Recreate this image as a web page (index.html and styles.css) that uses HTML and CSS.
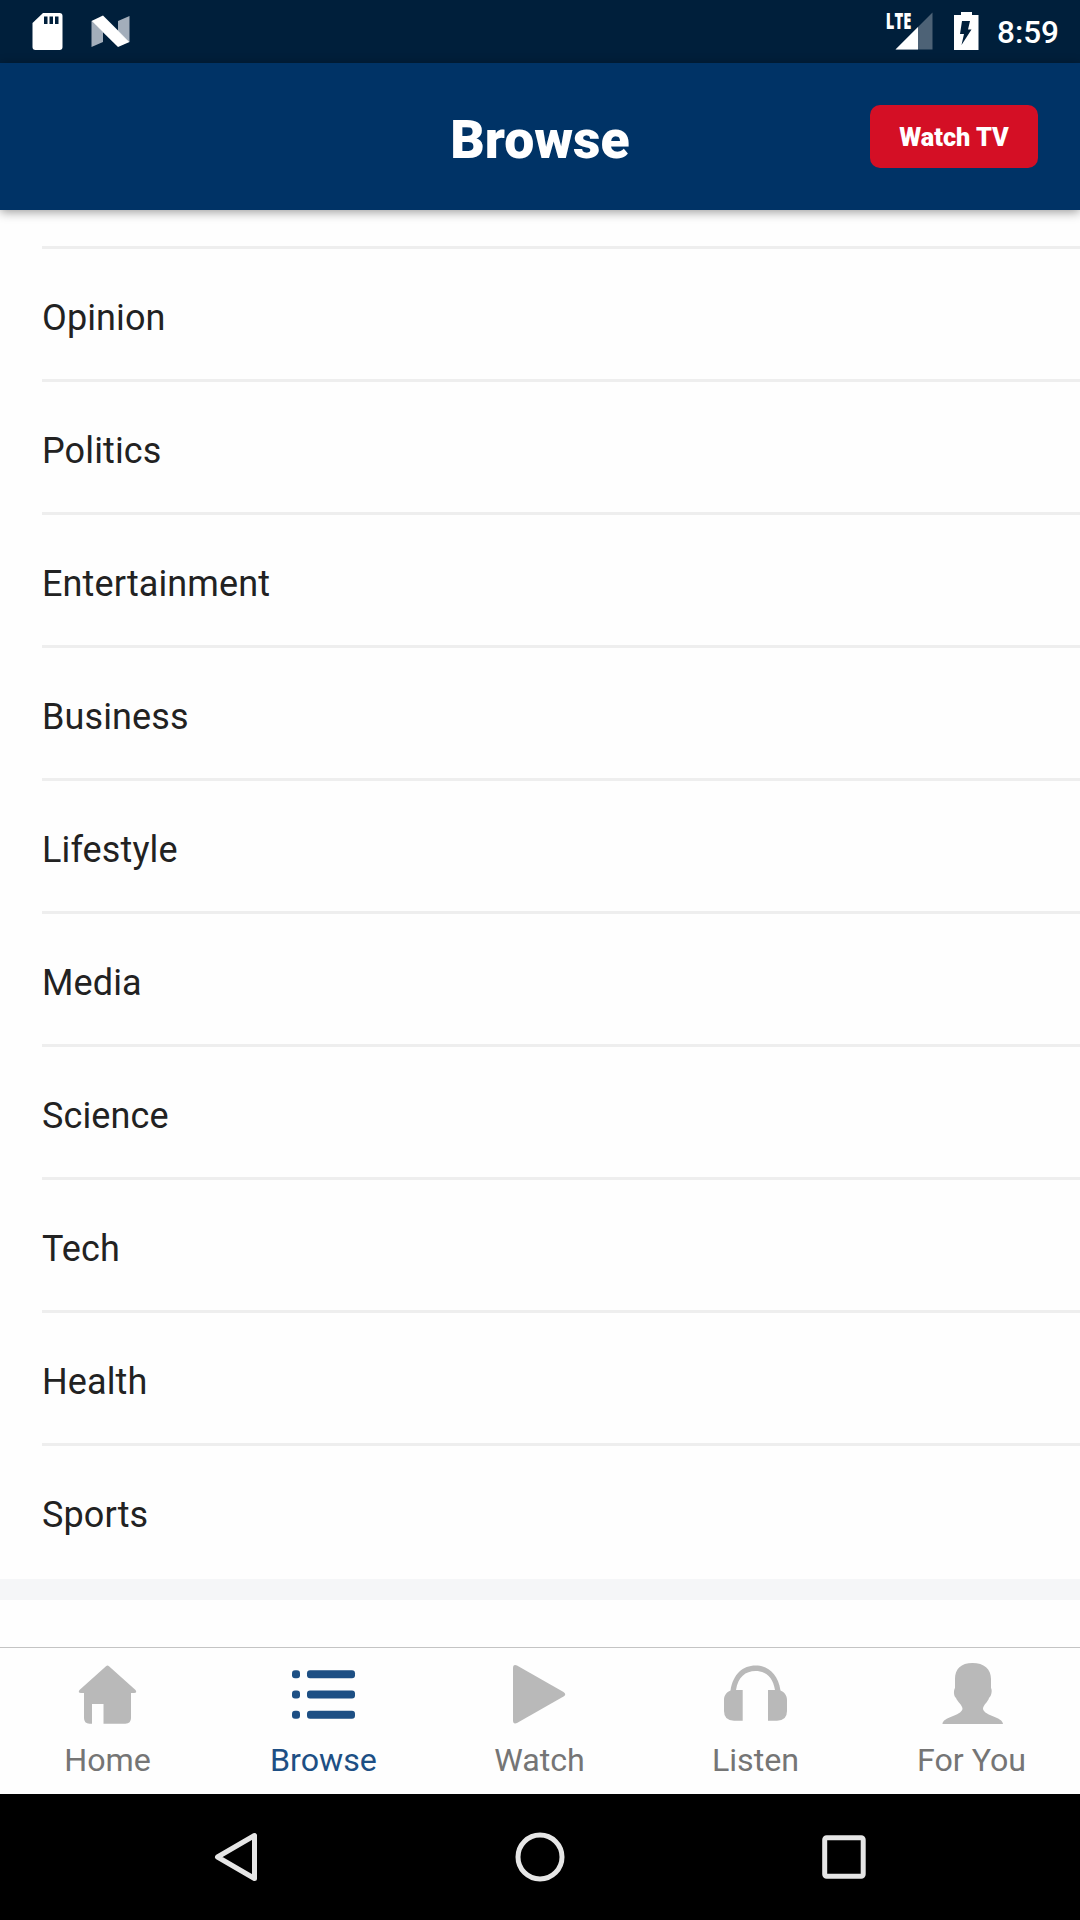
FILE: index.html
```html
<!DOCTYPE html>
<html lang="en">
<head>
<meta charset="utf-8">
<title>Browse</title>
<link rel="stylesheet" href="styles.css">
</head>
<body>
<div class="app">
  <div class="status">
    <svg class="status-left" width="140" height="63" viewBox="0 0 140 63">
      <path fill="#fff" d="M43 13H59.500Q62.500 13 62.500 16V47Q62.500 50 59.500 50H35.500Q32.500 50 32.500 47V23Z"/>
      <path fill="#001f3b" d="M44 16.500h3.500v7.500H44zM49.500 16.500H53v7.500h-3.500zM55 16.500h3.500v7.500H55z"/>
      <path fill="#a3aebb" d="M91.500 21L103 32V42L91.500 47ZM118 21L129.500 16V42L118 31Z"/>
      <path fill="#fff" d="M91.500 21L103 15.500L129.500 42L118 47Z"/>
    </svg>
    <div class="status-right">
      <svg width="100" height="63" viewBox="880 0 100 63">
        <path fill="#4d6276" d="M932.500 12.500V49.500H895.500Z"/>
        <path fill="#001f3b" d="M880 10h33v21h-33z"/>
        <path fill="#fff" d="M918 27V49.500H895.500Z"/>
        <text class="lte" x="885.800" y="29.200" textLength="25.500" lengthAdjust="spacingAndGlyphs">LTE</text>
        <path fill="#fff" d="M961 12h11v3h6.500v35H954V15h7z"/>
        <path fill="#001f3b" d="M962 21h8l-2 8.500h3.500L961.500 45l2.500-11h-4z"/>
      </svg>
      <span class="clock">8:59</span>
    </div>
  </div>
  <header class="header">
    <h1 class="title">Browse</h1>
    <button class="watch-tv">Watch TV</button>
  </header>
  <main class="content">
    <ul class="list">
      <li class="row">Opinion</li>
      <li class="row">Politics</li>
      <li class="row">Entertainment</li>
      <li class="row">Business</li>
      <li class="row">Lifestyle</li>
      <li class="row">Media</li>
      <li class="row">Science</li>
      <li class="row">Tech</li>
      <li class="row">Health</li>
      <li class="row">Sports</li>
    </ul>
    <div class="band"></div>
  </main>
  <nav class="tabs">
    <a class="tab">
      <svg class="icon" width="80" height="80" viewBox="67 1656 80 80"><path d="M106 1666.200Q107.500 1665 109 1666.200L135.500 1690Q137.500 1693 134 1693H131V1718Q131 1723.700 125.300 1723.700H103.500V1704H92V1723.700H89.500Q84 1723.700 84 1718V1693H81Q77.500 1693 79.500 1690Z"/></svg>
      <span>Home</span>
    </a>
    <a class="tab active">
      <svg class="icon" width="80" height="80" viewBox="283 1656 80 80"><rect x="292" y="1670.300" width="8" height="8" rx="3"/><rect x="307" y="1670.300" width="48" height="8" rx="3"/><rect x="292" y="1690.500" width="8" height="8" rx="3"/><rect x="307" y="1690.500" width="48" height="8" rx="3"/><rect x="292" y="1710.700" width="8" height="8" rx="3"/><rect x="307" y="1710.700" width="48" height="8" rx="3"/></svg>
      <span>Browse</span>
    </a>
    <a class="tab">
      <svg class="icon" width="80" height="80" viewBox="499 1656 80 80"><path d="M513 1668Q513 1664 517 1665.500L563.500 1692Q567 1694.300 563.500 1696.500L517 1723Q513 1724.500 513 1720.500Z"/></svg>
      <span>Watch</span>
    </a>
    <a class="tab">
      <svg class="icon" width="80" height="80" viewBox="715 1656 80 80"><path d="M730.500 1690.500C733 1674 743 1665.500 755.500 1665.500S778 1674 780.500 1690.500C784.500 1692 787 1695.500 787 1700V1711Q787 1720.700 777 1720.700H768V1690H775C773 1677 765.500 1671 755.500 1671S738 1677 736 1690H742.700V1720.700H734Q724 1720.700 724 1711V1700C724 1695.500 726.500 1692 730.500 1690.500Z"/></svg>
      <span>Listen</span>
    </a>
    <a class="tab">
      <svg class="icon" width="80" height="80" viewBox="931 1656 80 80"><path d="M972.500 1663C984 1663 991 1669 991 1679V1688C992.500 1690 991.500 1696 989 1698C988 1702 983 1705 983 1709C984.500 1716 1003 1717 1003 1724H942.500C942.500 1717 961 1716 962.500 1709C962.500 1705 957.500 1702 956 1698C953.500 1696 953.500 1690 955 1688V1679C955 1669 961 1663 972.500 1663Z"/></svg>
      <span>For You</span>
    </a>
  </nav>
  <div class="sysnav">
    <svg width="52" height="60" viewBox="211 1827 52 60"><path d="M254.500 1835.500V1878.500L217.500 1857Z"/></svg>
    <svg width="60" height="60" viewBox="510 1827 60 60"><circle cx="540" cy="1857" r="22"/></svg>
    <svg width="54" height="60" viewBox="817 1827 54 60"><rect x="824.700" y="1837.700" width="38.500" height="38.500" rx="2"/></svg>
  </div>
</div>
</body>
</html>
```
FILE: styles.css
```css
* { box-sizing: border-box; }
body { margin: 0; font-family: Roboto, sans-serif; background: #fefefe; }
.app { width: 1080px; height: 1920px; display: flex; flex-direction: column; overflow: hidden; }
.status { height: 63px; flex: none; background: #001f3b; display: flex; justify-content: space-between; }
.status-right { display: flex; align-items: center; padding-right: 22px; }
.lte { font: 800 23px "Open Sans", sans-serif; fill: #fff; }
.clock { color: #fff; font-size: 31.5px; font-weight: 500; line-height: 63px; padding-top: 1px; width: 61px; margin-left: 17px; }
.header {
  height: 147px; flex: none; background: #003366; color: #fff; z-index: 1;
  display: grid; grid-template-columns: 1fr auto 1fr; align-items: center; padding: 0 42px;
  box-shadow: 0 2px 10px rgba(0, 0, 0, .4);
}
.title { grid-column: 2; margin: 0; font-size: 53.5px; font-weight: 900; line-height: 60px; padding-top: 7px; }
.watch-tv {
  justify-self: end; width: 168px; height: 63px; border: 0; border-radius: 10px; padding: 2px 0 0;
  background: #d40f25; color: #fff; font: 900 25.3px/30px Roboto, sans-serif;
}
.content { flex: 1; padding-top: 36px; }
.list { list-style: none; margin: 0; padding: 0 0 0 42px; }
.row { height: 133px; border-top: 3px solid #eee; padding-top: 7px; line-height: 125px; font-size: 36px; letter-spacing: .12px; color: #222; }
.band { height: 21px; margin-top: 3px; background: #f5f6f8; }
.tabs { height: 147px; flex: none; display: grid; grid-template-columns: repeat(5, 1fr); border-top: 1px solid #c4c4c4; }
.tab { display: flex; flex-direction: column; align-items: center; padding: 8px 1px 0 0; font-size: 32.2px; line-height: 38px; color: #757575; }
.tab span { margin-top: 5px; }
.icon { fill: #b9b9b9; margin-right: 1px; }
.active { color: #1d4f84; }
.active .icon { fill: #1d4f84; }
.sysnav { height: 126px; flex: none; background: #000; display: flex; gap: 247px; align-items: center; padding-left: 211px; }
.sysnav svg { flex: none; fill: none; stroke: #e6e6e6; stroke-width: 5; stroke-linejoin: round; }
```
